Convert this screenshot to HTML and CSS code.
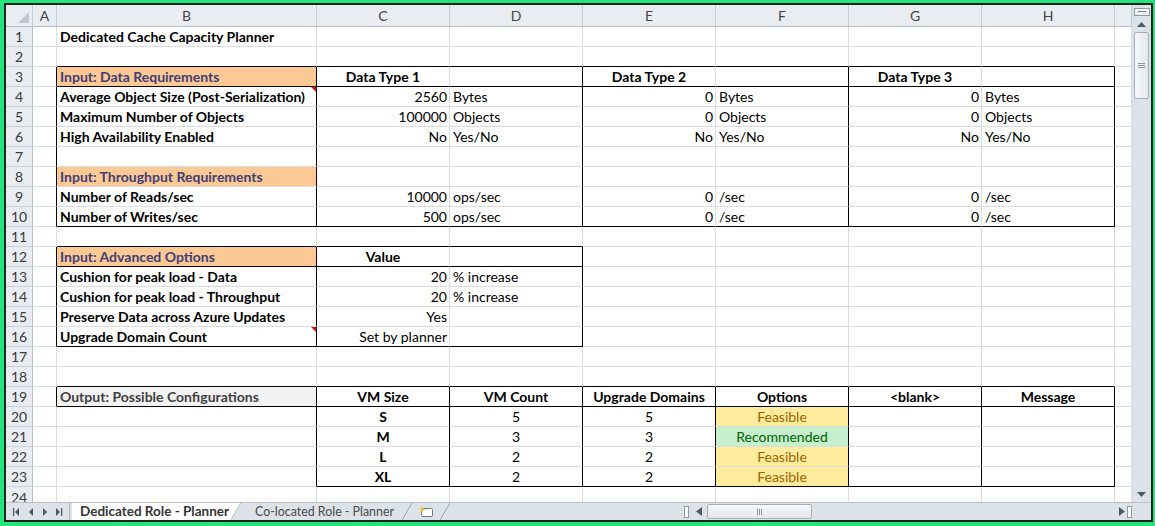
FILE: index.html
```html
<!DOCTYPE html>
<html>
<head>
<meta charset="utf-8">
<title>Dedicated Cache Capacity Planner</title>
<link rel="stylesheet" href="styles.css">
</head>
<body>
<div class="frame">
<div class="win">
  <div class="main">
    <div class="sheet">
      <div class="hd corner"><span class="sel"></span></div><div class="hd">A</div><div class="hd">B</div><div class="hd">C</div><div class="hd">D</div><div class="hd">E</div><div class="hd">F</div><div class="hd">G</div><div class="hd">H</div><div class="hd"></div>

      <div class="rn">1</div><div class="c"></div><div class="c bl">Dedicated Cache Capacity Planner</div><div class="c"></div><div class="c"></div><div class="c"></div><div class="c"></div><div class="c"></div><div class="c"></div><div class="c"></div>

      <div class="rn">2</div><div class="c"></div><div class="c b"></div><div class="c b"></div><div class="c b"></div><div class="c b"></div><div class="c b"></div><div class="c b"></div><div class="c b"></div><div class="c"></div>

      <div class="rn">3</div><div class="c r"></div><div class="c r b inp bl">Input: Data Requirements</div><div class="c b ctr bl">Data Type 1</div><div class="c b r"></div><div class="c b ctr bl">Data Type 2</div><div class="c b r"></div><div class="c b ctr bl">Data Type 3</div><div class="c b r"></div><div class="c"></div>

      <div class="rn">4</div><div class="c r"></div><div class="c r bl cm">Average Object Size (Post-Serialization)</div><div class="c n">2560</div><div class="c r">Bytes</div><div class="c n">0</div><div class="c r">Bytes</div><div class="c n">0</div><div class="c r">Bytes</div><div class="c"></div>

      <div class="rn">5</div><div class="c r"></div><div class="c r bl">Maximum Number of Objects</div><div class="c n">100000</div><div class="c r">Objects</div><div class="c n">0</div><div class="c r">Objects</div><div class="c n">0</div><div class="c r">Objects</div><div class="c"></div>

      <div class="rn">6</div><div class="c r"></div><div class="c r bl">High Availability Enabled</div><div class="c n">No</div><div class="c r">Yes/No</div><div class="c n">No</div><div class="c r">Yes/No</div><div class="c n">No</div><div class="c r">Yes/No</div><div class="c"></div>

      <div class="rn">7</div><div class="c r"></div><div class="c r"></div><div class="c"></div><div class="c r"></div><div class="c"></div><div class="c r"></div><div class="c"></div><div class="c r"></div><div class="c"></div>

      <div class="rn">8</div><div class="c r"></div><div class="c r inp bl">Input: Throughput Requirements</div><div class="c"></div><div class="c r"></div><div class="c"></div><div class="c r"></div><div class="c"></div><div class="c r"></div><div class="c"></div>

      <div class="rn">9</div><div class="c r"></div><div class="c r bl">Number of Reads/sec</div><div class="c n">10000</div><div class="c r">ops/sec</div><div class="c n">0</div><div class="c r">/sec</div><div class="c n">0</div><div class="c r">/sec</div><div class="c"></div>

      <div class="rn">10</div><div class="c r"></div><div class="c r b bl">Number of Writes/sec</div><div class="c b n">500</div><div class="c r b">ops/sec</div><div class="c b n">0</div><div class="c r b">/sec</div><div class="c b n">0</div><div class="c r b">/sec</div><div class="c"></div>

      <div class="rn">11</div><div class="c"></div><div class="c b"></div><div class="c b"></div><div class="c b"></div><div class="c"></div><div class="c"></div><div class="c"></div><div class="c"></div><div class="c"></div>

      <div class="rn">12</div><div class="c r"></div><div class="c r b inp bl">Input: Advanced Options</div><div class="c b ctr bl">Value</div><div class="c b r"></div><div class="c"></div><div class="c"></div><div class="c"></div><div class="c"></div><div class="c"></div>

      <div class="rn">13</div><div class="c r"></div><div class="c r bl">Cushion for peak load - Data</div><div class="c n">20</div><div class="c r">% increase</div><div class="c"></div><div class="c"></div><div class="c"></div><div class="c"></div><div class="c"></div>

      <div class="rn">14</div><div class="c r"></div><div class="c r bl">Cushion for peak load - Throughput</div><div class="c n">20</div><div class="c r">% increase</div><div class="c"></div><div class="c"></div><div class="c"></div><div class="c"></div><div class="c"></div>

      <div class="rn">15</div><div class="c r"></div><div class="c r bl">Preserve Data across Azure Updates</div><div class="c n">Yes</div><div class="c r"></div><div class="c"></div><div class="c"></div><div class="c"></div><div class="c"></div><div class="c"></div>

      <div class="rn">16</div><div class="c r"></div><div class="c r b bl cm">Upgrade Domain Count</div><div class="c b n">Set by planner</div><div class="c r b"></div><div class="c"></div><div class="c"></div><div class="c"></div><div class="c"></div><div class="c"></div>

      <div class="rn">17</div><div class="c"></div><div class="c"></div><div class="c"></div><div class="c"></div><div class="c"></div><div class="c"></div><div class="c"></div><div class="c"></div><div class="c"></div>

      <div class="rn">18</div><div class="c"></div><div class="c b"></div><div class="c b"></div><div class="c b"></div><div class="c b"></div><div class="c b"></div><div class="c b"></div><div class="c b"></div><div class="c"></div>

      <div class="rn">19</div><div class="c r"></div><div class="c r b out bl">Output: Possible Configurations</div><div class="c r b ctr bl">VM Size</div><div class="c r b ctr bl">VM Count</div><div class="c r b ctr bl">Upgrade Domains</div><div class="c r b ctr bl">Options</div><div class="c r b ctr bl">&lt;blank&gt;</div><div class="c r b ctr bl">Message</div><div class="c"></div>

      <div class="rn">20</div><div class="c"></div><div class="c r"></div><div class="c r ctr bl">S</div><div class="c r ctr">5</div><div class="c r ctr">5</div><div class="c r ctr neu">Feasible</div><div class="c r"></div><div class="c r"></div><div class="c"></div>

      <div class="rn">21</div><div class="c"></div><div class="c r"></div><div class="c r ctr bl">M</div><div class="c r ctr">3</div><div class="c r ctr">3</div><div class="c r ctr good">Recommended</div><div class="c r"></div><div class="c r"></div><div class="c"></div>

      <div class="rn">22</div><div class="c"></div><div class="c r"></div><div class="c r ctr bl">L</div><div class="c r ctr">2</div><div class="c r ctr">2</div><div class="c r ctr neu">Feasible</div><div class="c r"></div><div class="c r"></div><div class="c"></div>

      <div class="rn">23</div><div class="c"></div><div class="c r"></div><div class="c r b ctr bl">XL</div><div class="c r b ctr">2</div><div class="c r b ctr">2</div><div class="c r b ctr neu">Feasible</div><div class="c r b"></div><div class="c r b"></div><div class="c"></div>

      <div class="rn r24">24</div><div class="c"></div><div class="c"></div><div class="c"></div><div class="c"></div><div class="c"></div><div class="c"></div><div class="c"></div><div class="c"></div><div class="c"></div>
    </div>
    <div class="vscroll">
      <div class="vsplit"></div>
      <div class="varr"><svg width="9" height="5" viewBox="0 0 9 5"><path d="M0 5 L4.5 0 L9 5Z" fill="#4d5966"/></svg></div>
      <div class="vthumb"><span class="vgrip"></span></div>
      <div class="vspace"></div>
      <div class="varr"><svg width="9" height="5" viewBox="0 0 9 5"><path d="M0 0 L4.5 5 L9 0Z" fill="#4d5966"/></svg></div>
    </div>
  </div>
  <div class="tabbar">
    <div class="nav">
      <svg width="63" height="18" viewBox="0 0 63 18"><g fill="#4a5663"><rect x="7" y="5" width="1.2" height="8"/><path d="M9 9 L13 5 L13 13Z"/><path d="M23 9 L27 5 L27 13Z"/><path d="M37 5 L41 9 L37 13Z"/><path d="M50 5 L54 9 L50 13Z"/><rect x="55" y="5" width="1.2" height="8"/></g></svg>
    </div>
    <div class="tab active">Dedicated Role - Planner</div>
    <div class="tab plain">Co-located Role - Planner</div>
    <div class="tab ins"><svg width="16" height="13" viewBox="0 0 16 13"><rect x="3.5" y="3.5" width="11" height="8" rx="1" fill="#fff" stroke="#6b7a8c"/><path d="M4 1 L5 3.5 L7.5 4.5 L5 5.5 L4 8 L3 5.5 L0.5 4.5 L3 3.5Z" fill="#f2c230"/></svg></div>
    <div class="hscroll">
      <span class="hsplit"></span>
      <svg class="harr" width="6" height="9" viewBox="0 0 6 9"><path d="M6 0 L0 4.5 L6 9Z" fill="#4d5966"/></svg>
      <div class="htrack"><div class="hthumb"><span class="hgrip"></span></div></div>
      <svg class="harr" width="6" height="9" viewBox="0 0 6 9"><path d="M0 0 L6 4.5 L0 9Z" fill="#4d5966"/></svg>
      <span class="hsplit2"></span>
    </div>
    <div class="corner2"></div>
  </div>
</div>
</div>
</body>
</html>
```
FILE: styles.css
```css
body {
  margin: 0;
  font-family: Lato, "Liberation Sans", sans-serif;
}
.frame {
  width: 1155px;
  height: 526px;
  box-sizing: border-box;
  background: #22e37c;
  padding: 3px 2px 4px 4px;
}
.win {
  height: 100%;
  box-sizing: border-box;
  border: 2px solid #10261c;
  display: flex;
  flex-direction: column;
  background: #fff;
}
.main {
  display: flex;
  height: 497px;
  flex: none;
}
.sheet {
  width: 1126px;
  height: 497px;
  overflow: hidden;
  display: grid;
  grid-template-columns: 27px 24px 260px repeat(6, 133px) 17px;
  grid-template-rows: 22px;
  grid-auto-rows: 20px;
  font-size: 14px;
  color: #000;
}
.hd {
  background: #e9edf2;
  border-right: 1px solid #c5ccd5;
  border-bottom: 1px solid #b7bfc9;
  text-align: center;
  color: #454545;
  line-height: 21px;
  position: relative;
}
.corner .sel {
  position: absolute;
  right: 3px;
  bottom: 3px;
  width: 0;
  height: 0;
  border-style: solid;
  border-width: 0 0 11px 11px;
  border-color: transparent transparent #c2c8d0 transparent;
}
.rn {
  background: #e9edf2;
  border-right: 1px solid #b7bfc9;
  border-bottom: 1px solid #c9d0d8;
  text-align: center;
  color: #3b3b3b;
  line-height: 19px;
}
.rn.r24 { line-height: 17px; padding-top: 2px; }
.c {
  border-right: 1px solid #dadcdd;
  border-bottom: 1px solid #dadcdd;
  white-space: nowrap;
  line-height: 19px;
  padding: 0 3px;
  position: relative;
}
.r { border-right-color: #000; }
.b { border-bottom-color: #000; }
.n { text-align: right; padding-right: 2px; }
.ctr { text-align: center; }
.bl { font-weight: bold; }
.inp { background: #fcc894; color: #3f3f76; }
.out { background: #f2f2f2; color: #3f3f3f; }
.neu { background: #ffeb9c; color: #9c6500; }
.good { background: #c6efce; color: #006100; }
.cm::after {
  content: "";
  position: absolute;
  top: 0;
  right: 0;
  width: 0;
  height: 0;
  border-style: solid;
  border-width: 0 5px 5px 0;
  border-color: transparent #e01010 transparent transparent;
}

/* vertical scrollbar */
.vscroll {
  width: 19px;
  background: #dde2e9;
  display: flex;
  flex-direction: column;
  align-items: center;
}
.vsplit {
  width: 14px;
  height: 6px;
  margin-top: 3px;
  border: 1px solid #8e99a6;
  background: linear-gradient(#ffffff, #e6ebf0);
  position: relative;
}
.vsplit::after {
  content: "";
  position: absolute;
  left: 3px;
  right: 3px;
  top: 2px;
  height: 1px;
  background: #6d7986;
}
.varr {
  height: 16px;
  display: flex;
  align-items: center;
  justify-content: center;
}
.vthumb {
  width: 15px;
  height: 67px;
  box-sizing: border-box;
  border: 1px solid #a5afbb;
  border-radius: 2px;
  background: linear-gradient(to right, #f5f7f9, #e4e8ed);
  display: flex;
  align-items: center;
  justify-content: center;
}
.vgrip {
  width: 7px;
  height: 5px;
  border-top: 1px solid #8d97a3;
  border-bottom: 1px solid #8d97a3;
  position: relative;
  box-sizing: border-box;
}
.vgrip::after {
  content: "";
  position: absolute;
  left: 0;
  right: 0;
  top: 1px;
  height: 1px;
  background: #8d97a3;
}
.vspace { flex: 1; }

/* tab bar */
.tabbar {
  height: 18px;
  flex: none;
  display: flex;
  align-items: stretch;
  background: #dde2e9;
  border-top: 1px solid #b9c1cb;
  box-sizing: border-box;
  font-size: 13.5px;
}
.nav {
  width: 63px;
  border-right: 1px solid #a9b2bd;
  display: flex;
  align-items: center;
}
.tab {
  position: relative;
  padding: 0 18px 0 9px;
  line-height: 17px;
  color: #444;
  white-space: nowrap;
}
.tab.plain {
  font-size: 12.4px;
  color: #4a4a4a;
  padding-left: 8px;
  padding-right: 18px;
}
.tab::after {
  content: "";
  position: absolute;
  right: 0;
  top: 0;
  bottom: 0;
  width: 10px;
  background: linear-gradient(to top left, transparent 46%, #8b95a1 50%, transparent 54%);
}
.tab.active {
  background: #fff;
  font-weight: bold;
  color: #333;
  margin-left: 2px;
  padding-left: 8px;
  padding-right: 12px;
  margin-right: 6px;
  clip-path: polygon(0 0, 100% 0, calc(100% - 10px) 100%, 0 100%);
}
.tab.active::after {
  background: linear-gradient(to top left, transparent 44%, #8b95a1 50%, transparent 56%);
}
.tab.ins {
  padding: 2px 16px 0 6px;
}
.hscroll {
  margin-left: auto;
  width: 448px;
  display: flex;
  align-items: center;
}
.hsplit {
  width: 5px;
  height: 12px;
  border: 1px solid #8e99a6;
  background: #fff;
  box-sizing: border-box;
  margin-right: 7px;
}
.harr { flex: none; }
.htrack {
  flex: 1;
  height: 16px;
  margin: 0 3px;
  display: flex;
  align-items: center;
}
.hthumb {
  margin-left: 2px;
  width: 105px;
  height: 15px;
  box-sizing: border-box;
  border: 1px solid #a5afbb;
  border-radius: 2px;
  background: linear-gradient(#f6f8fa, #e3e7ec);
  display: flex;
  align-items: center;
  justify-content: center;
}
.hgrip {
  width: 5px;
  height: 6px;
  border-left: 1px solid #8d97a3;
  border-right: 1px solid #8d97a3;
  position: relative;
  box-sizing: border-box;
}
.hgrip::after {
  content: "";
  position: absolute;
  top: 0;
  bottom: 0;
  left: 1px;
  width: 1px;
  background: #8d97a3;
}
.hsplit2 {
  width: 5px;
  height: 12px;
  border: 1px solid #8e99a6;
  background: #fff;
  box-sizing: border-box;
  margin-left: 2px;
}
.corner2 {
  width: 19px;
  flex: none;
}
```
